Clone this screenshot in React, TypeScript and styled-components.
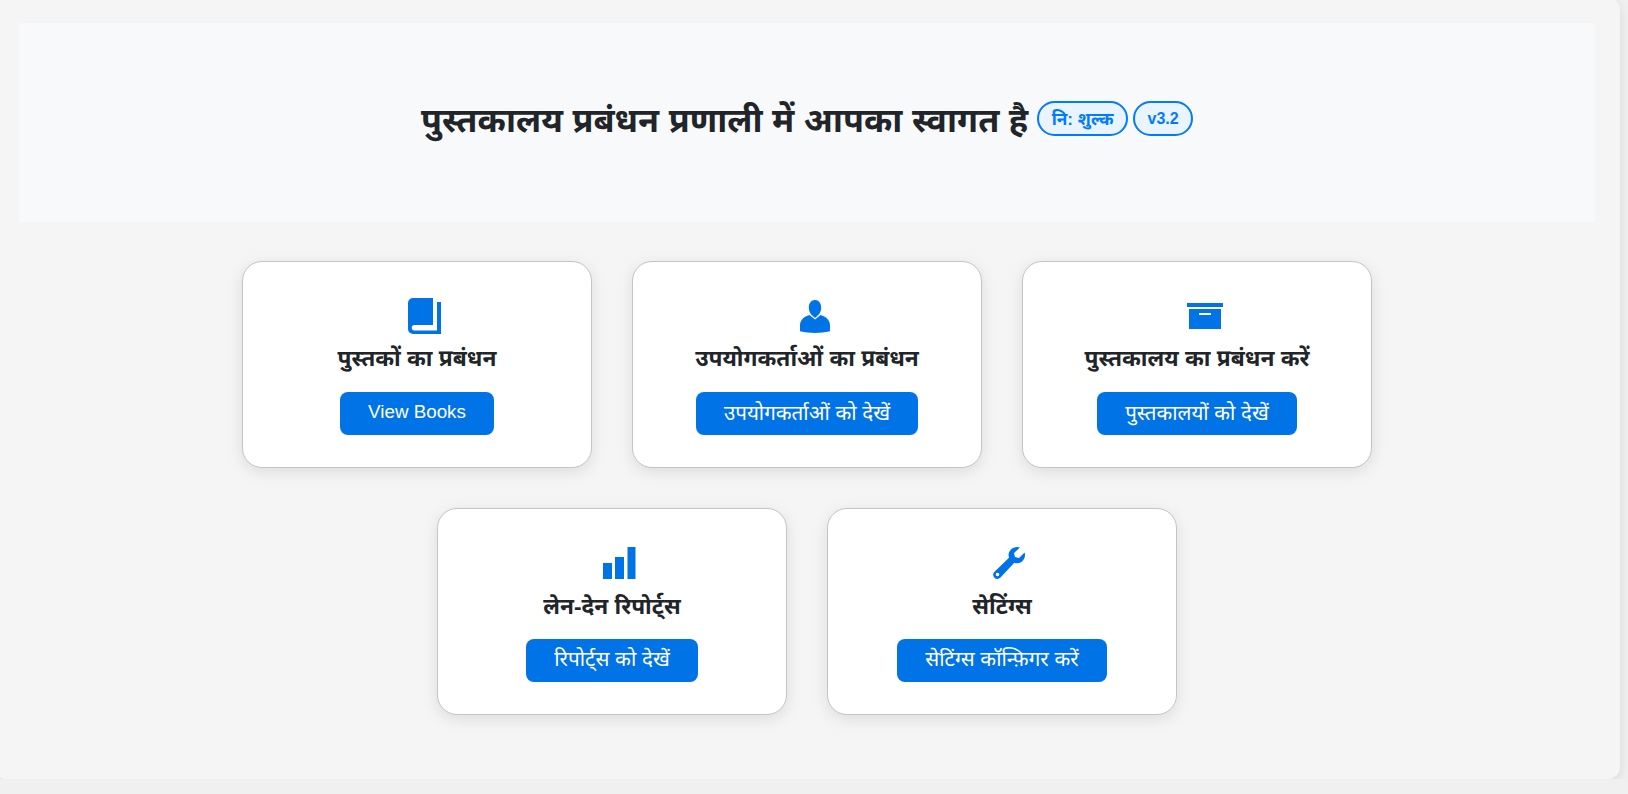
import React from "react";
import styled, { createGlobalStyle } from "styled-components";

const Global = createGlobalStyle`
  html, body { margin: 0; padding: 0; background: #f0f0f0; overflow: hidden; }
  body { font-family: "Liberation Sans", "Noto Sans", sans-serif; color: #212529; }
`;
const Panel = styled.main`
  box-sizing: border-box;
  width: 1626px;
  height: 781px;
  margin: -2px 0 0 -6px;
  padding: 25px;
  background: #f5f5f5;
  border-radius: 12px;
  box-shadow: 0 4px 12px rgba(0, 0, 0, 0.1);
`;
const Header = styled.header`
  height: 199px;
  background: #f8f9fa;
  display: flex;
  align-items: center;
  justify-content: center;
  padding-bottom: 8px;
  box-sizing: border-box;
`;
const Title = styled.h1`
  margin: 0 9px 0 0;
  font-size: 34.2px;
  font-weight: 700;
  color: #212529;
`;
const Badge = styled.span<{ $size: number }>`
  box-sizing: border-box;
  height: 35px;
  display: inline-flex;
  align-items: center;
  margin-right: 5px;
  padding: 0 12.5px;
  font-size: ${(p) => p.$size}px;
  font-weight: 700;
  color: #007bff;
  background: #e9f4ff;
  border: 2px solid #007bff;
  border-radius: 20px;
  &:last-child { margin-right: 0; }
`;
const Grid = styled.section`
  width: 1200px;
  margin: 19px auto 0;
  display: flex;
  flex-wrap: wrap;
  justify-content: center;
`;
const Card = styled.article<{ $low?: boolean }>`
  box-sizing: border-box;
  width: 350px;
  height: ${(p) => (p.$low ? 207.5 : 206.5)}px;
  margin: 20px;
  padding: 36px 20px 0;
  background: #fff;
  border: 1px solid #c4c4c4;
  border-radius: 20px;
  box-shadow: 0 4px 16px rgba(0, 0, 0, 0.1);
  display: flex;
  flex-direction: column;
  align-items: center;
`;
const IconBox = styled.div`
  height: 36px;
  margin-left: 15px;
  display: flex;
  align-items: center;
  justify-content: center;
  color: #0073e6;
  svg { display: block; fill: currentColor; }
`;
const CardTitle = styled.h3<{ $low?: boolean }>`
  margin: ${(p) => (p.$low ? "7.5px 0 14.5px" : "6px 0 16px")};
  font-size: 22.7px;
  line-height: 36px;
  font-weight: 700;
  color: #212529;
`;
const Action = styled.button<{ $size: number }>`
  height: 43px;
  padding: 0 28px 4px;
  border: 0;
  border-radius: 8px;
  background: #0073e6;
  color: #fff;
  font-family: inherit;
  font-size: ${(p) => p.$size}px;
`;

const BookIcon = () => (
  <svg width="33" height="36" viewBox="0 0 33 36">
    <path d="M5 0H25V27H6.500a2.750 2.750 0 0 0 0 5.500H29V4h4V36H5a5 5 0 0 1-5-5V5a5 5 0 0 1 5-5z" />
  </svg>
);
const UserIcon = () => (
  <svg width="30" height="33" viewBox="0 0 30 33">
    <path d="M15 0c3.800 0 6.200 3.200 6.200 7.500 0 3.400-1.400 6.200-3.200 7.800L15 18l-3-2.700c-1.800-1.600-3.200-4.400-3.200-7.800C8.800 3.200 11.200 0 15 0z" />
    <path d="M9.500 15 15 19.500 20.500 15C26 16.500 30 20 30 25.500v5.800C25 32.500 20 33 15 33S5 32.500 0 31.300v-5.800C0 20 4 16.500 9.500 15z" />
  </svg>
);
const ArchiveIcon = () => (
  <svg width="36" height="26" viewBox="0 0 36 26">
    <path d="M0 0h36v4H0z" />
    <path fillRule="evenodd" d="M2 6h32v20H2zM12 10v2h12v-2z" />
  </svg>
);
const ChartIcon = () => (
  <svg width="33" height="32" viewBox="0 0 33 32">
    <path d="M0 16h9v16H0zM12 10h9v22h-9zM24.500 0h8v32h-8z" />
  </svg>
);
const WrenchIcon = () => (
  <svg width="33" height="32" viewBox="0 0 33 32">
    <path fillRule="evenodd" d="M24 0c1.100 0 2.100.2 3 .5L21 6l1 4 4 1 5.600-5.500c.9 2.800.3 6.300-2 8.500-2.300 2.300-5.600 2.800-8.300 1.700L7.500 30.600c-1.800 1.800-4.500 1.800-6.100.1-1.700-1.700-1.600-4.400.1-6L16 10.800C15 8 15.600 5 17.700 2.700 19.400.9 21.700 0 24 0zM4.500 25.700a1.800 1.800 0 1 0 0 3.600 1.800 1.800 0 0 0 0-3.600z" />
  </svg>
);

const cards = [
  { icon: <BookIcon />, title: "पुस्तकों का प्रबंधन", action: "View Books", size: 18.8 },
  { icon: <UserIcon />, title: "उपयोगकर्ताओं का प्रबंधन", action: "उपयोगकर्ताओं को देखें", size: 20.6 },
  { icon: <ArchiveIcon />, title: "पुस्तकालय का प्रबंधन करें", action: "पुस्तकालयों को देखें", size: 20.5 },
  { icon: <ChartIcon />, title: "लेन-देन रिपोर्ट्स", action: "रिपोर्ट्स को देखें", size: 20.6, low: true },
  { icon: <WrenchIcon />, title: "सेटिंग्स", action: "सेटिंग्स कॉन्फ़िगर करें", size: 20.6, low: true },
];

export default function App() {
  return (
    <>
      <Global />
      <Panel>
        <Header>
          <Title>पुस्तकालय प्रबंधन प्रणाली में आपका स्वागत है</Title>
          <Badge $size={17.2}>नि: शुल्क</Badge>
          <Badge $size={16}>v3.2</Badge>
        </Header>
        <Grid>
          {cards.map((c) => (
            <Card key={c.title} $low={c.low}>
              <IconBox>{c.icon}</IconBox>
              <CardTitle $low={c.low}>{c.title}</CardTitle>
              <Action $size={c.size}>{c.action}</Action>
            </Card>
          ))}
        </Grid>
      </Panel>
    </>
  );
}
